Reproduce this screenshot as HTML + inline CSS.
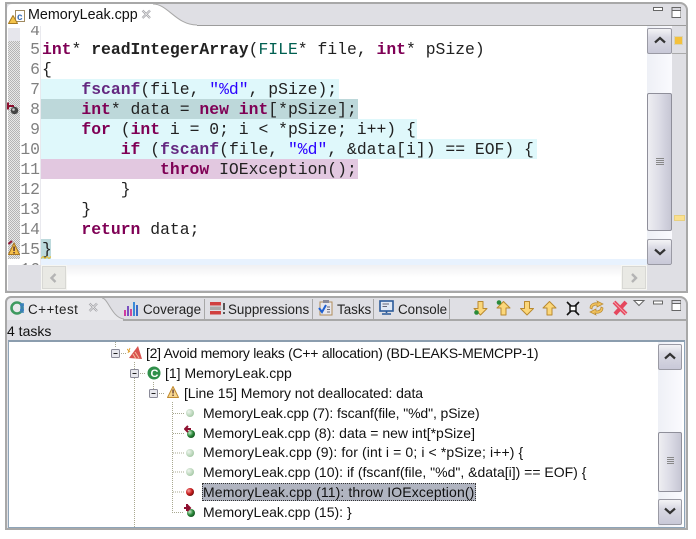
<!DOCTYPE html>
<html><head><meta charset="utf-8"><style>
html,body{margin:0;padding:0;background:#fff;width:696px;height:539px;overflow:hidden}
div,span.a,svg{position:absolute}
.l{left:0;width:696px;height:20px;font:16.4px/20px "Liberation Mono",monospace;color:#222;white-space:pre}
.n{position:absolute;right:656px;color:#808080;font:16.4px/20px "Liberation Mono",monospace}
.c{position:absolute;left:42px}
b{color:#7f0055}
.f{color:#642880;font-weight:bold}
.s{color:#2a00ff}
.t{font:14px/18px "Liberation Sans",sans-serif;color:#111;white-space:pre}
.tb{font-size:13.4px;color:#222}
.btn{box-sizing:border-box;border:1px solid #9a9aa4;border-radius:2px;background:linear-gradient(#f4f4f6,#d9d9e3 35%,#c9c9d8)}
.v{background:linear-gradient(90deg,#eeeef2,#dcdce6 50%,#c6c6d4);border:1px solid #8f8f9a;box-sizing:border-box;border-radius:2px}
.tr{background:linear-gradient(90deg,#eef0f6,#fafafe)}
</style></head><body>
<!-- editor pane -->
<div style="left:5px;top:2px;width:683px;height:291px;box-sizing:border-box;background:#dfdfe4;border:2px solid #a8a8a8;border-radius:0 8px 0 0"></div>
<div style="left:7px;top:4px;width:145px;height:23px;background:#fff;border-radius:5px 0 0 0"></div>
<svg style="left:150px;top:3px" width="48" height="24"><path d="M0 1 H3 C18 1 26 22 47 22 V24 H0Z" fill="#fff"/><path d="M3 1 C18 1 26 22 47 22" fill="none" stroke="#a8a8a8"/></svg>
<div style="left:197px;top:25px;width:489px;height:1px;background:#9c9c9c"></div>
<div style="left:8px;top:26px;width:639px;height:239px;background:#fff"></div>
<div style="left:7px;top:26px;width:1px;height:264px;background:#fff"></div>
<svg style="left:8px;top:8px" width="18" height="18"><rect x="7.500" y="2.500" width="9" height="11" fill="#fff" stroke="#a08a60"/><text x="9" y="12" font-family="Liberation Sans" font-size="10" font-weight="bold" fill="#3a6db5">c</text><path d="M5 7.500L9.500 15.500H0.500Z" fill="#f4c34a" stroke="#a77a20" stroke-linejoin="round"/></svg>
<span class="a t" style="left:28px;top:6px;font-size:14.3px">MemoryLeak.cpp</span>
<svg style="left:141px;top:9px" width="11" height="11"><path d="M1.500 1.500L9 9M9 1.500L1.500 9" stroke="#9a9aa0" stroke-width="2.200" fill="none"/><path d="M1.500 1.500L9 9M9 1.500L1.500 9" stroke="#eee" stroke-width=".8" fill="none"/></svg>
<svg style="left:653px;top:7px" width="28" height="12"><rect x=".5" y=".5" width="9" height="3" fill="#fff" stroke="#666"/><rect x="19" y="0.500" width="9" height="10" fill="#fff" stroke="#666"/><rect x="19" y="0.500" width="9" height="3" fill="#d8d8de" stroke="#666"/></svg>
<!-- gutter -->
<div style="left:8px;top:28px;width:12px;height:13px;background:#e6e6ec"></div>
<div style="left:8px;top:41px;width:12px;height:218px;background:repeating-conic-gradient(#b4b4b4 0 25%,#e8e8e8 0 50%) 0 0/2px 2px"></div>
<div style="left:40px;top:26px;width:1px;height:239px;background:#e9e9ee"></div>
<!-- highlights -->
<div style="left:41px;top:259px;width:606px;height:6px;background:#e8f2fe"></div>
<div style="left:41px;top:79px;width:298px;height:20px;background:#dff8fb"></div>
<div style="left:41px;top:99px;width:317px;height:20px;background:#bdd8da"></div>
<div style="left:41px;top:119px;width:376px;height:20px;background:#dff8fb"></div>
<div style="left:41px;top:139px;width:496px;height:20px;background:#dff8fb"></div>
<div style="left:41px;top:159px;width:317px;height:20px;background:#e2c8e0"></div>
<div style="left:41px;top:239px;width:10px;height:20px;background:#bcd9dc"></div>
<!-- code -->
<div style="left:0;top:26px;width:696px;height:239px;overflow:hidden">
<div class="l" style="top:-5px"><span class="n">4</span></div>
<div class="l" style="top:14px"><span class="n">5</span><span class="c"><b>int</b>* <strong>readIntegerArray</strong>(<span style="color:#005f50">FILE</span>* file, <b>int</b>* pSize)</span></div>
<div class="l" style="top:34px"><span class="n">6</span><span class="c">{</span></div>
<div class="l" style="top:54px"><span class="n">7</span><span class="c">    <span class="f">fscanf</span>(file, <span class="s">"%d"</span>, pSize);</span></div>
<div class="l" style="top:74px"><span class="n">8</span><span class="c">    <b>int</b>* data = <b>new</b> <b>int</b>[*pSize];</span></div>
<div class="l" style="top:94px"><span class="n">9</span><span class="c">    <b>for</b> (<b>int</b> i = 0; i &lt; *pSize; i++) {</span></div>
<div class="l" style="top:114px"><span class="n">10</span><span class="c">        <b>if</b> (<span class="f">fscanf</span>(file, <span class="s">"%d"</span>, &amp;data[i]) == EOF) {</span></div>
<div class="l" style="top:134px"><span class="n">11</span><span class="c">            <b>throw</b> IOException();</span></div>
<div class="l" style="top:154px"><span class="n">12</span><span class="c">        }</span></div>
<div class="l" style="top:174px"><span class="n">13</span><span class="c">    }</span></div>
<div class="l" style="top:194px"><span class="n">14</span><span class="c">    <b>return</b> data;</span></div>
<div class="l" style="top:214px"><span class="n">15</span><span class="c">}</span></div>
<div class="l" style="top:234px"><span class="n">16</span></div>
</div>
<svg style="left:41px;top:256px" width="10" height="3"><path d="M0 2.500L2 .5L4 2.500L6 .5L8 2.500L10 .5" stroke="#e8c030" fill="none"/></svg>
<!-- gutter icons -->
<svg style="left:7px;top:101px" width="13" height="15"><circle cx="7.500" cy="9.500" r="3.800" fill="#444"/><circle cx="6.500" cy="8.500" r="1.300" fill="#ccc"/><path d="M1 5H7M1 1.500V8.500" stroke="#8e1030" stroke-width="2" fill="none"/></svg>
<svg style="left:7px;top:240px" width="13" height="19"><path d="M7 3L12.500 14.500H1.500Z" fill="#f6c04a" stroke="#a8761f" stroke-linejoin="round"/><rect x="6.300" y="6.500" width="1.500" height="4.500" fill="#533"/><rect x="6.300" y="12" width="1.500" height="1.500" fill="#533"/><path d="M1.500 4L5 1" stroke="#8e1030" stroke-width="2"/></svg>
<!-- h scrollbar -->
<div style="left:41px;top:265px;width:606px;height:25px;background:linear-gradient(#f0f0f2,#fff 50%)"></div>
<div style="left:41px;top:265px;width:26px;height:25px;box-sizing:border-box;background:#e9e9e4;border:1px solid #f6f6f2;box-shadow:0 0 0 1px #d8d8d4 inset"></div>
<div style="left:621px;top:265px;width:26px;height:25px;box-sizing:border-box;background:#e9e9e4;border:1px solid #f6f6f2;box-shadow:0 0 0 1px #d8d8d4 inset"></div>
<svg style="left:48px;top:272px" width="12" height="12"><path d="M7.500 2L3.500 6L7.500 10" stroke="#b4b4b4" stroke-width="2.400" fill="none"/></svg>
<svg style="left:628px;top:272px" width="12" height="12"><path d="M4 2L8 6L4 10" stroke="#b4b4b4" stroke-width="2.400" fill="none"/></svg>
<!-- v scrollbar -->
<div class="tr" style="left:647px;top:26px;width:25px;height:239px"></div>
<div class="btn" style="left:647px;top:28px;width:25px;height:26px"></div>
<svg style="left:653px;top:36px" width="14" height="8"><path d="M2 6.500L7 2L12 6.500" stroke="#333" stroke-width="2.200" fill="none"/></svg>
<div class="v" style="left:647px;top:93px;width:25px;height:138px"></div>
<svg style="left:656px;top:158px" width="8" height="8"><path d="M0 .5H8M0 2.500H8M0 4.500H8M0 6.500H8" stroke="#888"/></svg>
<div class="btn" style="left:647px;top:239px;width:25px;height:26px"></div>
<svg style="left:653px;top:248px" width="14" height="8"><path d="M2 1.500L7 6L12 1.500" stroke="#333" stroke-width="2.200" fill="none"/></svg>
<div style="left:672px;top:53px;width:14px;height:1px;background:#aaa"></div>
<div style="left:675px;top:37px;width:7px;height:7px;background:#f4c13c;outline:1px solid #d8d3b8"></div>
<div style="left:674px;top:215px;width:9px;height:4px;background:#fbe08e;border:1px solid #e8d080"></div>
<!-- bottom pane -->
<div style="left:5px;top:296px;width:683px;height:234px;box-sizing:border-box;background:#dfdfe4;border:2px solid #a8a8a8;border-radius:6px 8px 0 0"></div>
<div style="left:7px;top:298px;width:94px;height:22px;background:#e9e9ec;border-radius:5px 0 0 0"></div>
<svg style="left:98px;top:297px" width="27" height="23"><path d="M0 1H4C10 1 14 21 26 22V23H0Z" fill="#e9e9ec"/><path d="M4 1C10 1 14 21 26 22" stroke="#a8a8a8" fill="none"/></svg>
<div style="left:123px;top:319px;width:563px;height:2px;background:#a8a8a8"></div>
<div style="left:204px;top:299px;width:1px;height:20px;background:#a8a8a8"></div>
<div style="left:312px;top:299px;width:1px;height:20px;background:#a8a8a8"></div>
<div style="left:373px;top:299px;width:1px;height:20px;background:#a8a8a8"></div>
<div style="left:449px;top:299px;width:1px;height:20px;background:#a8a8a8"></div>
<svg style="left:10px;top:300px" width="16" height="17"><circle cx="7" cy="8" r="5.500" fill="none" stroke="#3f9a60" stroke-width="2.600"/><path d="M10 5H14M10 10H14M11 3V13M13 3V13" stroke="#3a7fc0" stroke-width="1.400"/></svg>
<span class="a t tb" style="left:28px;top:301px;letter-spacing:.5px">C++test</span>
<svg style="left:88px;top:302px" width="11" height="11"><path d="M1.500 1.500L9 9M9 1.500L1.500 9" stroke="#9a9aa0" stroke-width="2.200" fill="none"/><path d="M1.500 1.500L9 9M9 1.500L1.500 9" stroke="#eee" stroke-width=".8" fill="none"/></svg>
<svg style="left:124px;top:301px" width="16" height="16"><rect x="0" y="9" width="2" height="6" fill="#d03aa0"/><rect x="3" y="5" width="2" height="10" fill="#7a4fc0"/><rect x="6" y="8" width="2" height="7" fill="#d04a9a"/><rect x="9" y="1" width="2" height="14" fill="#3a8ad8"/><rect x="12" y="4" width="2" height="11" fill="#3a6ac8"/></svg>
<span class="a t tb" style="left:143px;top:301px">Coverage</span>
<svg style="left:210px;top:301px" width="16" height="15"><rect x="0" y="1" width="11" height="3.500" fill="#d04040"/><rect x="0" y="5.500" width="11" height="3.500" fill="#aaa"/><rect x="0" y="10" width="11" height="3.500" fill="#d04040"/><rect x="13" y="2" width="2" height="7" fill="#555"/><rect x="13" y="11" width="2" height="2" fill="#555"/></svg>
<span class="a t tb" style="left:228px;top:301px">Suppressions</span>
<svg style="left:318px;top:299px" width="16" height="18"><rect x="2" y="3" width="12" height="13" fill="#e8e8ee" stroke="#b08d5a"/><rect x="5" y="1" width="6" height="3" fill="#8a8a98"/><path d="M1 9L4 13L8 6" stroke="#2060d0" stroke-width="2" fill="none"/><path d="M9 8H12M9 10.500H12M9 13H12" stroke="#667"/></svg>
<span class="a t tb" style="left:337px;top:301px">Tasks</span>
<svg style="left:379px;top:300px" width="16" height="16"><rect x="1" y="1" width="13" height="10" fill="#dfe8f5" stroke="#2a5a9a" stroke-width="1.600"/><path d="M3.500 4H10M3.500 6.500H8" stroke="#667"/><path d="M7.500 11V13M3 14H12" stroke="#2a5a9a" stroke-width="1.600"/></svg>
<span class="a t tb" style="left:398px;top:301px">Console</span>
<!-- toolbar -->
<svg style="left:472px;top:299px" width="160" height="20">
<g fill="#fbd77a" stroke="#b98a30" stroke-linejoin="round">
<path d="M6 2.500H11V9.500H15L8.500 16L2 9.500H6Z"/>
<path d="M29 16V9H25L31.500 2.500L38 9H34V16Z"/>
<path d="M52.500 2.500H57.500V9.500H61.500L55 16L48.500 9.500H52.500Z"/>
<path d="M75 16V9H71L77.500 2.500L84 9H80V16Z"/></g>
<circle cx="4.500" cy="13.500" r="2.300" fill="#2a8a3a"/>
<circle cx="27" cy="3.500" r="2.300" fill="#2a8a3a"/>
<path d="M95 3L99 7M107 3L103 7M95 16L99 12M107 16L103 12" stroke="#111" stroke-width="1.600"/><rect x="98" y="7" width="6" height="5" fill="#fff" stroke="#111" stroke-width="1.400"/>
<path d="M118 9C118 5 122 3 126 4L125 2L131 5L125 8V6C122 6 120 7 120 10ZM131 9C131 13 127 15 123 14L124 16L118 13L124 10V12C127 12 129 11 129 8Z" fill="#f1c25e" stroke="#b98a30" stroke-width=".7"/>
<path d="M142 3L154 15M154 3L143 15" stroke="#e5485e" stroke-width="4"/><path d="M142 3L154 15" stroke="#f5a0aa" stroke-width="1"/>
</svg>
<svg style="left:632px;top:299px" width="14" height="9"><path d="M2 1.500H12L7 6.500Z" fill="#fff" stroke="#666"/></svg>
<svg style="left:653px;top:299px" width="28" height="14"><rect x=".5" y="2" width="9" height="3" fill="#fff" stroke="#666"/><rect x="19" y="1.500" width="9" height="10" fill="#fff" stroke="#666"/><rect x="19" y="1.500" width="9" height="3" fill="#d8d8de" stroke="#666"/></svg>
<span class="a t" style="left:7px;top:322px">4 tasks</span>
<!-- tree box -->
<div style="left:8px;top:340px;width:677px;height:188px;box-sizing:border-box;background:#fff;border:1px solid #8ea4b8;border-top:2px solid #8b9dae"></div>
<div class="tr" style="left:658px;top:342px;width:24px;height:185px"></div>
<div class="btn" style="left:658px;top:344px;width:24px;height:26px"></div>
<svg style="left:663px;top:352px" width="14" height="8"><path d="M2 6.500L7 2L12 6.500" stroke="#333" stroke-width="2.200" fill="none"/></svg>
<div class="v" style="left:658px;top:432px;width:24px;height:60px"></div>
<svg style="left:667px;top:457px" width="8" height="8"><path d="M0 .5H7M0 2.500H7M0 4.500H7M0 6.500H7" stroke="#888"/></svg>
<div class="btn" style="left:658px;top:499px;width:24px;height:26px"></div>
<svg style="left:663px;top:507px" width="14" height="8"><path d="M2 1.500L7 6L12 1.500" stroke="#333" stroke-width="2.200" fill="none"/></svg>
<!-- tree lines -->
<svg style="left:100px;top:342px" width="110" height="185">
<g stroke="#a8a890" stroke-dasharray="1 1" fill="none">
<path d="M34.500 20V185"/><path d="M53.500 40V50"/><path d="M72.500 60V170.500H84"/>
<path d="M21 11.500H26M40 31.500H45M59 51.500H64M73 71.500H84M73 91.500H84M73 111H84M73 130H84M73 150H84"/>
<path d="M15.500 0V6"/>
</g>
<g fill="#e8e8ee" stroke="#8a8a98"><rect x="11.500" y="7.500" width="8" height="8" rx="1"/><rect x="30.500" y="27.500" width="8" height="8" rx="1"/><rect x="49.500" y="47.500" width="8" height="8" rx="1"/></g>
<path d="M13.500 11.500H17.500M32.500 31.500H36.500M51.500 51.500H55.500" stroke="#222"/>
</svg>
<svg style="left:127px;top:345px" width="16" height="16"><path d="M2 13L11 1L15 14Z" fill="#d9534f"/><path d="M8 7L12 13M6 9L9 14" stroke="#f4c0a0"/><path d="M0 4L3 7M3 3L1 8" stroke="#e0a030"/></svg>
<span class="a t" style="left:146px;top:344px;letter-spacing:-.27px">[2] Avoid memory leaks (C++ allocation) (BD-LEAKS-MEMCPP-1)</span>
<svg style="left:147px;top:366px" width="14" height="14"><circle cx="7" cy="7" r="6.500" fill="#2f8f4a"/><text x="3.500" y="11" font-family="Liberation Sans" font-size="11" font-weight="bold" fill="#fff">C</text></svg>
<span class="a t" style="left:165px;top:364px">[1] MemoryLeak.cpp</span>
<svg style="left:166px;top:385px" width="14" height="14"><path d="M7 1.500L12.500 12.500H1.500Z" fill="#f8d890" stroke="#c08a30" stroke-linejoin="round"/><rect x="6.400" y="4.500" width="1.300" height="4" fill="#533"/><rect x="6.400" y="9.500" width="1.300" height="1.500" fill="#533"/></svg>
<span class="a t" style="left:184px;top:384px;letter-spacing:-.08px">[Line 15] Memory not deallocated: data</span>
<svg style="left:184px;top:405px" width="16" height="118">
<defs><radialGradient id="g" cx=".35" cy=".35" r=".8"><stop offset="0" stop-color="#eef5ee"/><stop offset="1" stop-color="#9ac29a"/></radialGradient><radialGradient id="d" cx=".35" cy=".35" r=".8"><stop offset="0" stop-color="#cfe8cf"/><stop offset=".5" stop-color="#2a8a3a"/><stop offset="1" stop-color="#0c3c14"/></radialGradient><radialGradient id="r" cx=".35" cy=".35" r=".8"><stop offset="0" stop-color="#f8a0a0"/><stop offset=".5" stop-color="#c81c1c"/><stop offset="1" stop-color="#500808"/></radialGradient></defs>
<circle cx="6" cy="8" r="4" fill="url(#g)"/>
<circle cx="7" cy="29" r="4" fill="url(#d)"/>
<path d="M1 24H7M4 21L1 24L4 27" stroke="#8e1030" stroke-width="2" fill="none"/>
<circle cx="6" cy="48" r="4" fill="url(#g)"/>
<circle cx="6" cy="67" r="4" fill="url(#g)"/>
<circle cx="6" cy="87" r="4" fill="url(#r)"/>
<circle cx="7" cy="108" r="4" fill="url(#d)"/>
<path d="M0 103H6M3 100L6 103L3 106M3 99V106" stroke="#8e1030" stroke-width="2" fill="none"/>
</svg>
<span class="a t" style="left:203px;top:404px;letter-spacing:-.11px">MemoryLeak.cpp (7): fscanf(file, "%d", pSize)</span>
<span class="a t" style="left:203px;top:424px">MemoryLeak.cpp (8): data = new int[*pSize]</span>
<span class="a t" style="left:203px;top:443px;letter-spacing:.11px">MemoryLeak.cpp (9): for (int i = 0; i &lt; *pSize; i++) {</span>
<span class="a t" style="left:203px;top:463px">MemoryLeak.cpp (10): if (fscanf(file, "%d", &amp;data[i]) == EOF) {</span>
<div style="left:202px;top:483px;width:274px;height:18px;box-sizing:border-box;background:#b0b4c0;border:1px dotted #333"></div>
<span class="a t" style="left:203px;top:483px;letter-spacing:.12px">MemoryLeak.cpp (11): throw IOException()</span>
<span class="a t" style="left:203px;top:503px">MemoryLeak.cpp (15): }</span>
</body></html>
